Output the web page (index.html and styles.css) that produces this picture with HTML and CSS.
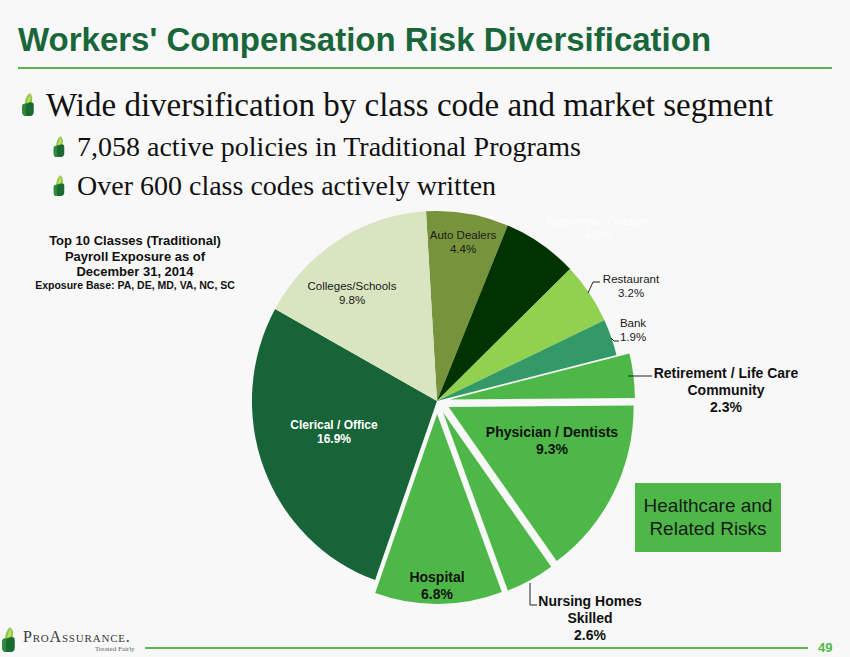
FILE: index.html
```html
<!DOCTYPE html>
<html lang="en">
<head>
<meta charset="utf-8">
<title>Workers' Compensation Risk Diversification</title>
<link rel="stylesheet" href="styles.css">
</head>
<body>
<svg class="defs" width="0" height="0" aria-hidden="true">
  <defs>
    <symbol id="leaf" viewBox="0 0 12 24">
      <path d="M2.8,12.4 C2.6,7.2 4.4,2.8 7.4,0.2 C9.6,1.4 10.6,3.8 10.4,6.6 L9.6,12.4 Z" fill="#8cc63e"/>
      <path d="M4.4,11.2 C5.4,6.6 6.8,3.2 7.8,1.2 C8.8,3 9,5.4 8.6,8.2 Z" fill="#b9dd6c"/>
      <path d="M0,14 C0,12 1.4,10.8 3.4,11.2 L8.8,9.6 C10.8,9.2 12,10.4 12,12.4 L12,19.6 C12,22.4 10.6,24 8.2,24 L3.2,24 C1.2,24 0,22.4 0,20.2 Z" fill="#1b6a31"/>
      <path d="M0,14 C0,12 1.4,10.8 3.4,11.2 L4.2,12 C3.2,15.2 3.2,19.6 4.4,24 L3.2,24 C1.2,24 0,22.4 0,20.2 Z" fill="#2f8a3c"/>
    </symbol>
  </defs>
</svg>
<div class="slide">
  <h1 class="title">Workers' Compensation Risk Diversification</h1>
  <div class="title-rule"></div>

  <ul class="bullets">
    <li class="lvl1"><svg class="icon icon-lg"><use href="#leaf"/></svg><span>Wide diversification by class code and market segment</span></li>
    <li class="lvl2"><svg class="icon icon-sm"><use href="#leaf"/></svg><span>7,058 active policies in Traditional Programs</span></li>
    <li class="lvl2"><svg class="icon icon-sm"><use href="#leaf"/></svg><span>Over 600 class codes actively written</span></li>
  </ul>

  <div class="chart">
    <svg class="pie" width="850" height="415" viewBox="0 205 850 415">
      <g class="chart-title">
        <text x="135" y="245">Top 10 Classes (Traditional)</text>
        <text x="135" y="261">Payroll Exposure as of</text>
        <text x="135" y="276">December 31, 2014</text>
        <text class="small" x="135" y="289">Exposure Base: PA, DE, MD, VA, NC, SC</text>
      </g>

      <path d="M437,401 L426.0,211.3 A185,190 0 0 1 507.7,225.4 Z" fill="#77933c"/>
      <path d="M437,401 L507.7,225.4 A185,190 0 0 1 570.1,269.0 Z" fill="#013300"/>
      <path d="M437,401 L570.1,269.0 A185,190 0 0 1 604.4,320.2 Z" fill="#92d050"/>
      <path d="M437,401 L604.4,320.2 A185,190 0 0 1 616.5,355.1 Z" fill="#339966"/>
      <path transform="translate(12.9,-1.6)" d="M437,401 L616.5,355.1 A185,190 0 0 1 622.0,399.5 Z" fill="#4db848"/>
      <path transform="translate(11.6,5.9)" d="M437,401 L622.0,399.5 A185,190 0 0 1 545.1,555.2 Z" fill="#4db848"/>
      <path transform="translate(6.1,11.5)" d="M437,401 L545.1,555.2 A185,190 0 0 1 501.7,579.0 Z" fill="#4db848"/>
      <path transform="translate(0.1,13)" d="M437,401 L501.7,579.0 A185,190 0 0 1 375.1,580.1 Z" fill="#4db848"/>
      <path d="M437,401 L375.1,580.1 A185,190 0 0 1 275.1,309.0 Z" fill="#166437"/>
      <path d="M437,401 L275.1,309.0 A185,190 0 0 1 426.0,211.3 Z" fill="#d9e4c0"/>

      <g class="leaders">
        <polyline points="588,293 593,282 600,282"/>
        <polyline points="611,338 614,341 619,341"/>
        <polyline points="628,376 652,376"/>
        <polyline points="530,583 530,605 537,605"/>
      </g>

      <g class="lbl">
        <text x="463" y="239">Auto Dealers</text>
        <text x="463" y="253">4.4%</text>
        <text x="352" y="290">Colleges/Schools</text>
        <text x="352" y="304">9.8%</text>
        <text x="631" y="283">Restaurant</text>
        <text x="631" y="297">3.2%</text>
        <text x="633" y="327">Bank</text>
        <text x="633" y="341">1.9%</text>
      </g>
      <g class="lbl white">
        <text x="597" y="225">Salesmen - Outside</text>
        <text x="597" y="239">4.0%</text>
      </g>
      <g class="lbl bold white small-bold">
        <text x="334" y="429">Clerical / Office</text>
        <text x="334" y="443">16.9%</text>
      </g>
      <g class="lbl bold">
        <text x="726" y="378">Retirement / Life Care</text>
        <text x="726" y="395">Community</text>
        <text x="726" y="412">2.3%</text>
        <text x="552" y="437">Physician / Dentists</text>
        <text x="552" y="454">9.3%</text>
        <text x="437" y="582">Hospital</text>
        <text x="437" y="599">6.8%</text>
        <text x="590" y="606">Nursing Homes</text>
        <text x="590" y="623">Skilled</text>
        <text x="590" y="640">2.6%</text>
      </g>
    </svg>
    <div class="callout">Healthcare and<br>Related Risks</div>
  </div>

  <footer class="footer">
    <div class="logo">
      <svg class="logo-mark"><use href="#leaf"/></svg>
      <div class="logo-text">
        <div class="brand">ProAssurance.</div>
        <div class="tagline">Treated Fairly</div>
      </div>
    </div>
    <div class="footer-rule"></div>
    <div class="page-num">49</div>
  </footer>
</div>
</body>
</html>
```

FILE: styles.css
```css
html, body {
  margin: 0;
  padding: 0;
  background: #f8f8f8;
}

.defs {
  position: absolute;
  width: 0;
  height: 0;
  overflow: hidden;
}

.slide {
  width: 850px;
  height: 657px;
  display: flex;
  flex-direction: column;
  background: #f8f8f8;
  overflow: hidden;
  font-family: "Liberation Sans", Arial, sans-serif;
}

.title {
  margin: 21px 0 0 18px;
  font-family: "Liberation Sans", Arial, sans-serif;
  font-weight: bold;
  font-size: 33px;
  line-height: 38px;
  color: #19663a;
  white-space: nowrap;
}

.title-rule {
  margin: 8px 18px 0 18px;
  height: 2px;
  background: #5bb450;
}

.bullets {
  list-style: none;
  margin: 17px 0 0 0;
  padding: 0;
  height: 119px;
  box-sizing: border-box;
  font-family: "Liberation Serif", "Times New Roman", serif;
  color: #111;
}

.bullets li {
  display: flex;
  align-items: flex-start;
  white-space: nowrap;
}

.lvl1 {
  font-size: 33px;
  line-height: 38px;
  padding-left: 22px;
}

.lvl2 {
  font-size: 28px;
  line-height: 34px;
  padding-left: 53px;
}

.lvl1 + .lvl2 {
  margin-top: 6px;
}

.lvl2 + .lvl2 {
  margin-top: 5px;
}

.icon {
  flex: none;
}

.icon-lg {
  width: 12px;
  height: 23px;
  margin: 7px 12px 0 0;
}

.icon-sm {
  width: 12px;
  height: 21px;
  margin: 6px 12px 0 0;
}

.chart {
  position: relative;
  height: 415px;
  flex: none;
}

.pie {
  display: block;
  overflow: visible;
}

.chart-title text {
  font-family: "Liberation Sans", Arial, sans-serif;
  font-weight: bold;
  font-size: 13px;
  fill: #111;
  text-anchor: middle;
}

.chart-title .small {
  font-size: 10.5px;
}

.leaders polyline {
  fill: none;
  stroke: #222;
  stroke-width: 1;
}

.lbl text {
  font-family: "Liberation Sans", Arial, sans-serif;
  font-size: 11.5px;
  fill: #1a1a1a;
  text-anchor: middle;
}

.lbl.bold text {
  font-weight: bold;
  font-size: 14px;
  fill: #111;
}

.lbl.white text {
  fill: #ffffff;
}

.lbl.small-bold text {
  font-size: 12px;
}

.callout {
  position: absolute;
  left: 635px;
  top: 278px;
  width: 146px;
  height: 69px;
  box-sizing: border-box;
  padding-top: 11px;
  background: #4db848;
  color: #1a1a1a;
  font-family: "Liberation Sans", Arial, sans-serif;
  font-size: 19px;
  line-height: 23px;
  text-align: center;
}

.footer {
  flex: none;
  height: 37px;
  display: flex;
  align-items: flex-start;
  padding: 0 16px 0 2px;
}

.logo {
  width: 143px;
  flex: none;
  display: flex;
  align-items: flex-start;
}

.logo-mark {
  width: 13px;
  height: 25px;
  margin-top: 7px;
  flex: none;
}

.logo-text {
  margin-left: 8px;
  padding-top: 9px;
}

.brand {
  font-family: "Liberation Serif", "Times New Roman", serif;
  font-variant: small-caps;
  font-size: 16px;
  line-height: 15px;
  color: #3a3a3a;
  letter-spacing: 0.8px;
  white-space: nowrap;
}

.tagline {
  font-family: "Liberation Serif", "Times New Roman", serif;
  font-size: 7px;
  line-height: 8px;
  color: #666;
  margin-left: 72px;
  margin-top: 1px;
  white-space: nowrap;
}

.footer-rule {
  flex: 1;
  height: 2px;
  margin-top: 27px;
  background: #5bb450;
}

.page-num {
  width: 16px;
  margin: 21px 0 0 10px;
  font-family: "Liberation Sans", Arial, sans-serif;
  font-weight: bold;
  font-size: 13px;
  line-height: 14px;
  color: #4db848;
}
```
